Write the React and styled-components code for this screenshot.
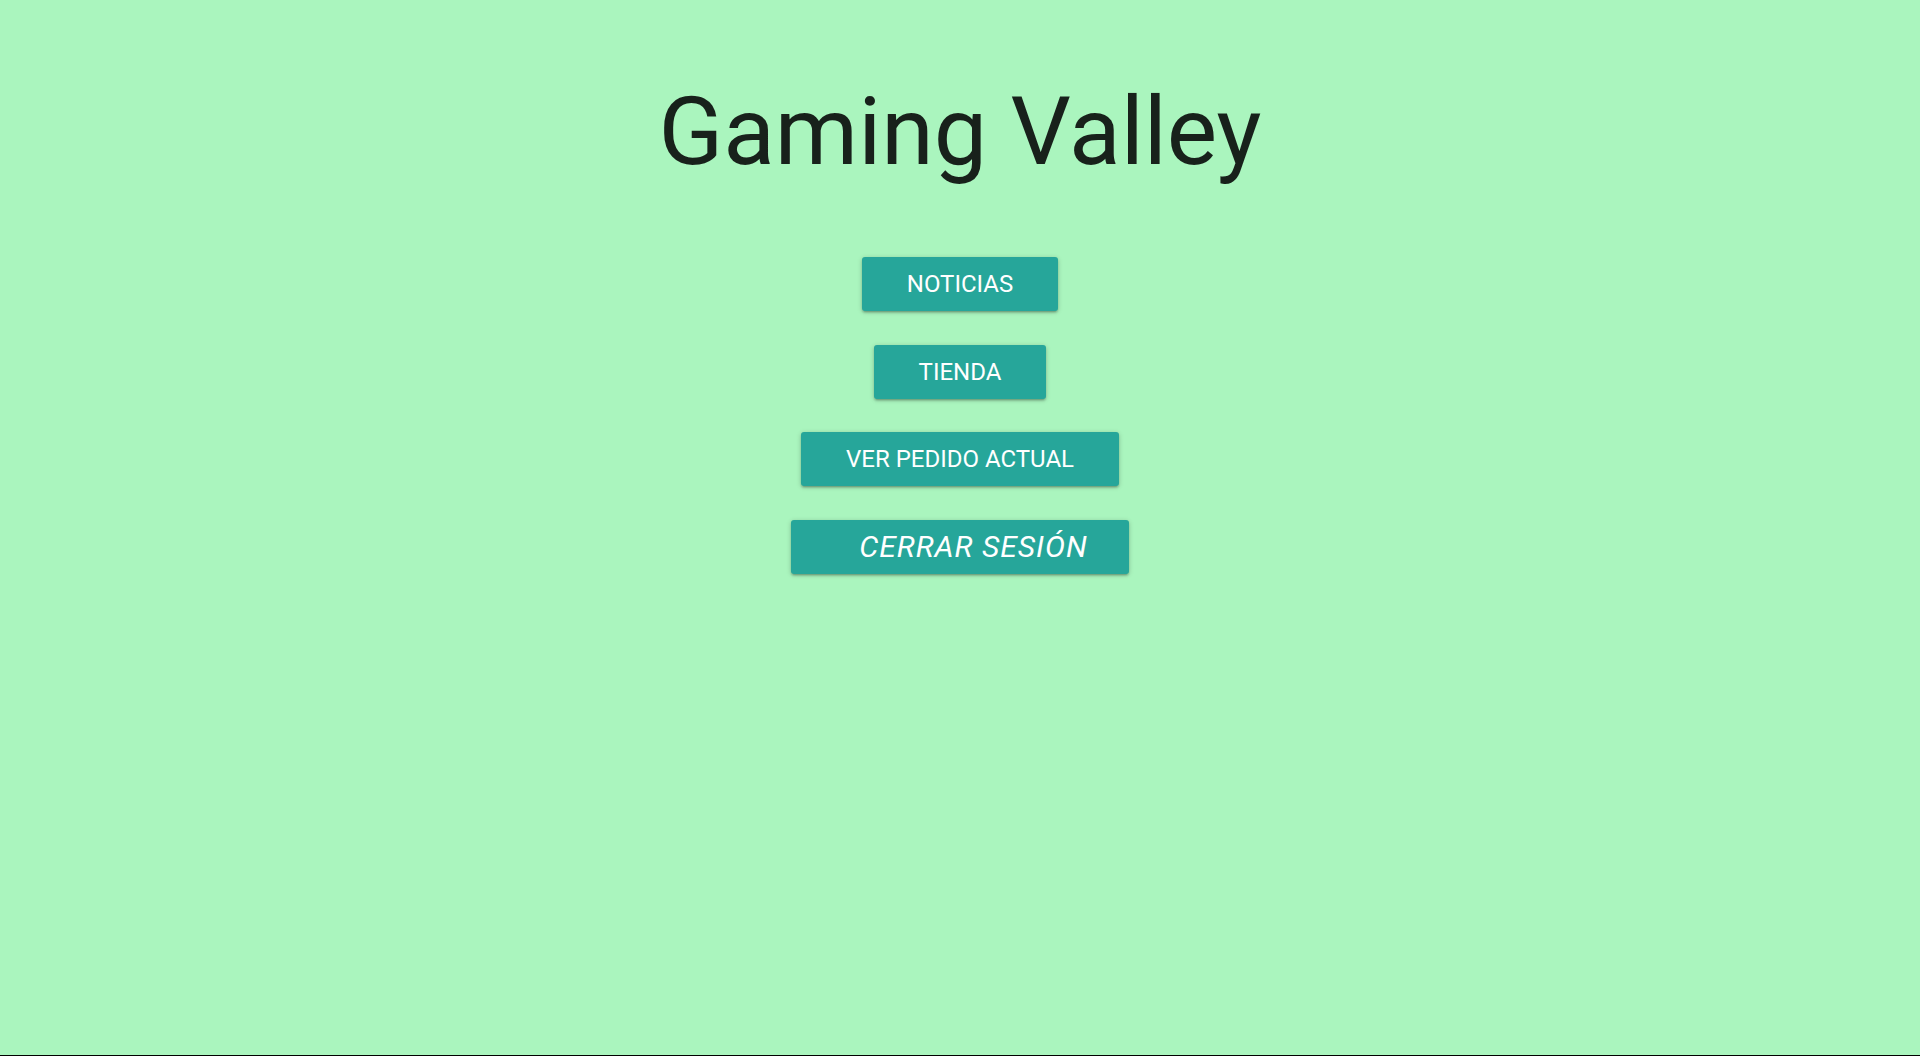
import React from "react";
import styled, { createGlobalStyle } from "styled-components";

const GlobalStyle = createGlobalStyle`
  html, body {
    margin: 0;
    padding: 0;
    background: #aaf5be;
  }
  body {
    font-family: Roboto, "Liberation Sans", sans-serif;
  }
`;

const Page = styled.div`
  box-sizing: border-box;
  height: 1056px;
  background: #aaf5be;
  border-bottom: 1px solid #000;
  display: flex;
  flex-direction: column;
  align-items: center;
`;

const Title = styled.h1`
  margin: 76px 0 0;
  font-size: 95px;
  font-weight: 400;
  line-height: 112px;
  color: #18211b;
`;

const Menu = styled.nav`
  margin-top: 69px;
  display: flex;
  flex-direction: column;
  align-items: center;
  gap: 33.5px;
`;

const Button = styled.button`
  height: 54px;
  padding: ${(props) => (props.italic ? "0 41px 0 68px" : "0 45px")};
  border: none;
  border-radius: 3px;
  background: #26a69a;
  color: #fff;
  font-family: Roboto, "Liberation Sans", sans-serif;
  font-size: ${(props) => (props.italic ? "30px" : "24px")};
  font-style: ${(props) => (props.italic ? "italic" : "normal")};
  letter-spacing: ${(props) => (props.italic ? "1px" : "0")};
  text-transform: uppercase;
  cursor: pointer;
  box-shadow: 0 2px 2px 0 rgba(0, 0, 0, 0.14), 0 3px 1px -2px rgba(0, 0, 0, 0.12),
    0 1px 5px 0 rgba(0, 0, 0, 0.2);
`;

const App = () => (
  <>
    <GlobalStyle />
    <Page>
      <Title>Gaming Valley</Title>
      <Menu>
        <Button>Noticias</Button>
        <Button>Tienda</Button>
        <Button>Ver pedido actual</Button>
        <Button italic>Cerrar sesión</Button>
      </Menu>
    </Page>
  </>
);

export default App;
